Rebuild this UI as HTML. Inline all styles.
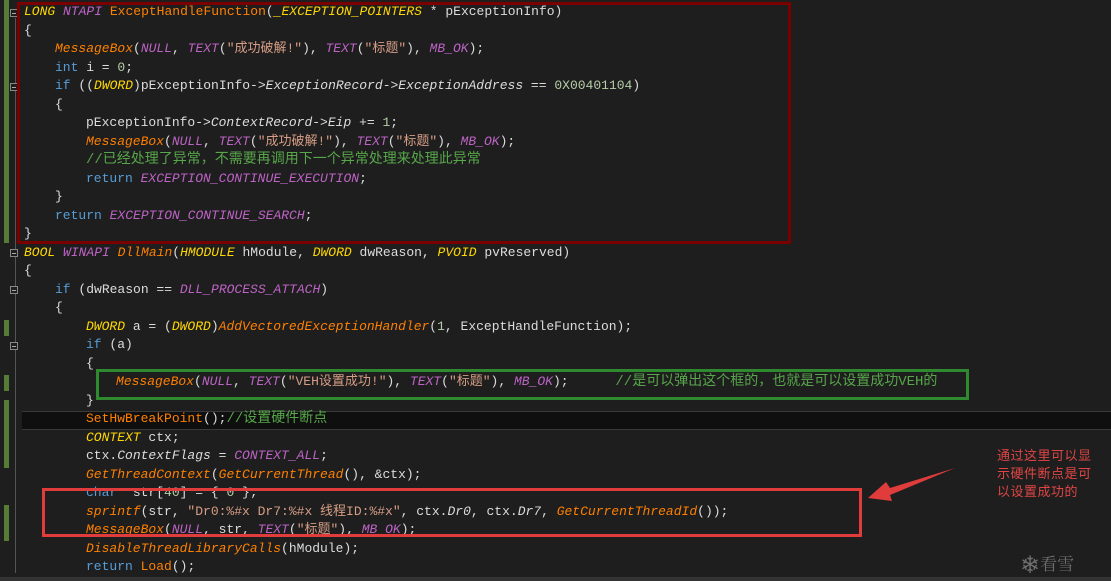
<!DOCTYPE html>
<html><head><meta charset="utf-8"><style>
html,body{margin:0;padding:0;background:#1e1e1e;width:1111px;height:581px;overflow:hidden;position:relative}
.l{position:absolute;height:18.5px;line-height:18.5px;font:13px "Liberation Mono","Noto Sans CJK SC",monospace;color:#dcdcdc;white-space:pre}
.l span{line-height:0}
.k{color:#569cd6}.f{color:#ff8000;font-style:italic}.t{color:#ffd700;font-style:italic}.m{color:#bd63c5;font-style:italic}
.s{color:#d69d85}.c{color:#57a64a;font-size:14px}.n{color:#b5cea8}.i{font-style:italic}
.a{left:24px}.b{left:55px}.d{left:86px}.e{left:116px}
.bar{position:absolute;left:4px;width:5px;background:#577c35}
.fold{position:absolute;left:10px;width:8px;height:8px;border:1px solid #888;box-sizing:border-box;background:#1e1e1e}
.fold:after{content:"";position:absolute;left:1px;top:3px;width:4px;height:1px;background:#aaa}
.box{position:absolute;box-sizing:border-box}
</style></head><body>
<div class="bar" style="top:0;height:243px"></div>
<div class="bar" style="top:320px;height:16px"></div>
<div class="bar" style="top:375px;height:16px"></div>
<div class="bar" style="top:400px;height:68px"></div>
<div class="bar" style="top:505px;height:36px"></div>
<div style="position:absolute;left:15px;top:18px;width:1px;height:555px;background:#555"></div>
<div class="fold" style="top:9px"></div><div class="fold" style="top:83px"></div>
<div class="fold" style="top:249px"></div><div class="fold" style="top:286px"></div><div class="fold" style="top:342px"></div>
<div style="position:absolute;left:22px;top:411px;width:1089px;height:19px;background:#0f0f0f;border-top:1px solid #3a3a3a;border-bottom:1px solid #3a3a3a;box-sizing:border-box"></div>
<div style="position:absolute;left:0;top:577px;width:1111px;height:4px;background:#333"></div>

<div class="l a" style="top:4px"><span class="t">LONG</span> <span class="m">NTAPI</span> <span style="color:#ff8000">ExceptHandleFunction</span>(<span class="t">_EXCEPTION_POINTERS</span> * pExceptionInfo)</div>
<div class="l a" style="top:22.5px">{</div>
<div class="l b" style="top:41px"><span class="f">MessageBox</span>(<span class="m">NULL</span>, <span class="m">TEXT</span>(<span class="s">"成功破解!"</span>), <span class="m">TEXT</span>(<span class="s">"标题"</span>), <span class="m">MB_OK</span>);</div>
<div class="l b" style="top:59.5px"><span class="k">int</span> i = <span class="n">0</span>;</div>
<div class="l b" style="top:78px"><span class="k">if</span> ((<span class="t">DWORD</span>)pExceptionInfo-><span class="i">ExceptionRecord</span>-><span class="i">ExceptionAddress</span> == <span class="n">0X00401104</span>)</div>
<div class="l b" style="top:96.5px">{</div>
<div class="l d" style="top:115px">pExceptionInfo-><span class="i">ContextRecord</span>-><span class="i">Eip</span> += <span class="n">1</span>;</div>
<div class="l d" style="top:133.5px"><span class="f">MessageBox</span>(<span class="m">NULL</span>, <span class="m">TEXT</span>(<span class="s">"成功破解!"</span>), <span class="m">TEXT</span>(<span class="s">"标题"</span>), <span class="m">MB_OK</span>);</div>
<div class="l d" style="top:152px"><span class="c">//已经处理了异常，不需要再调用下一个异常处理来处理此异常</span></div>
<div class="l d" style="top:170.5px"><span class="k">return</span> <span class="m">EXCEPTION_CONTINUE_EXECUTION</span>;</div>
<div class="l b" style="top:189px">}</div>
<div class="l b" style="top:207.5px"><span class="k">return</span> <span class="m">EXCEPTION_CONTINUE_SEARCH</span>;</div>
<div class="l a" style="top:226px">}</div>
<div class="l a" style="top:244.5px"><span class="t">BOOL</span> <span class="m">WINAPI</span> <span class="f">DllMain</span>(<span class="t">HMODULE</span> hModule, <span class="t">DWORD</span> dwReason, <span class="t">PVOID</span> pvReserved)</div>
<div class="l a" style="top:263px">{</div>
<div class="l b" style="top:281.5px"><span class="k">if</span> (dwReason == <span class="m">DLL_PROCESS_ATTACH</span>)</div>
<div class="l b" style="top:300px">{</div>
<div class="l d" style="top:318.5px"><span class="t">DWORD</span> a = (<span class="t">DWORD</span>)<span class="f">AddVectoredExceptionHandler</span>(<span class="n">1</span>, ExceptHandleFunction);</div>
<div class="l d" style="top:337px"><span class="k">if</span> (a)</div>
<div class="l d" style="top:355.5px">{</div>
<div class="l e" style="top:374px"><span class="f">MessageBox</span>(<span class="m">NULL</span>, <span class="m">TEXT</span>(<span class="s">"VEH设置成功!"</span>), <span class="m">TEXT</span>(<span class="s">"标题"</span>), <span class="m">MB_OK</span>);      <span class="c">//是可以弹出这个框的，也就是可以设置成功VEH的</span></div>
<div class="l d" style="top:392.5px">}</div>
<div class="l d" style="top:411px"><span style="color:#ff8000">SetHwBreakPoint</span>();<span class="c">//设置硬件断点</span></div>
<div class="l d" style="top:429.5px"><span class="t">CONTEXT</span> ctx;</div>
<div class="l d" style="top:448px">ctx.<span class="i">ContextFlags</span> = <span class="m">CONTEXT_ALL</span>;</div>
<div class="l d" style="top:466.5px"><span class="f">GetThreadContext</span>(<span class="f">GetCurrentThread</span>(), &amp;ctx);</div>
<div class="l d" style="top:485px"><span class="k">char</span>  str[<span class="n">40</span>] = { <span class="n">0</span> };</div>
<div class="l d" style="top:503.5px"><span class="f">sprintf</span>(str, <span class="s">"Dr0:%#x Dr7:%#x 线程ID:%#x"</span>, ctx.<span class="i">Dr0</span>, ctx.<span class="i">Dr7</span>, <span class="f">GetCurrentThreadId</span>());</div>
<div class="l d" style="top:522px"><span class="f">MessageBox</span>(<span class="m">NULL</span>, str, <span class="m">TEXT</span>(<span class="s">"标题"</span>), <span class="m">MB_OK</span>);</div>
<div class="l d" style="top:540.5px"><span class="f">DisableThreadLibraryCalls</span>(hModule);</div>
<div class="l d" style="top:559px"><span class="k">return</span> <span style="color:#ff8000">Load</span>();</div>

<div class="box" style="left:17px;top:2px;width:774px;height:242px;border:3px solid #7a0000"></div>
<div class="box" style="left:96px;top:369px;width:873px;height:31px;border:3px solid #2f8a2f"></div>
<div class="box" style="left:42px;top:488px;width:820px;height:49px;border:3px solid #e03c3c"></div>

<svg style="position:absolute;left:0;top:0" width="1111" height="581">
<polygon points="955,468 890,488 886,482 868,498 892,501 890,495" fill="#e03c3c"/>
</svg>
<div style="position:absolute;left:997px;top:446px;font:13px/18px 'Noto Sans CJK SC',sans-serif;color:#e04545;width:105px;letter-spacing:0.5px">通过这里可以显示硬件断点是可以设置成功的</div>
<div style="position:absolute;left:1020px;top:551px;font:17px/24px 'Noto Serif CJK SC',serif;color:#6e6e6e;white-space:nowrap"><span style="font-size:24px;vertical-align:-3px">❄</span>看雪</div>
</body></html>
